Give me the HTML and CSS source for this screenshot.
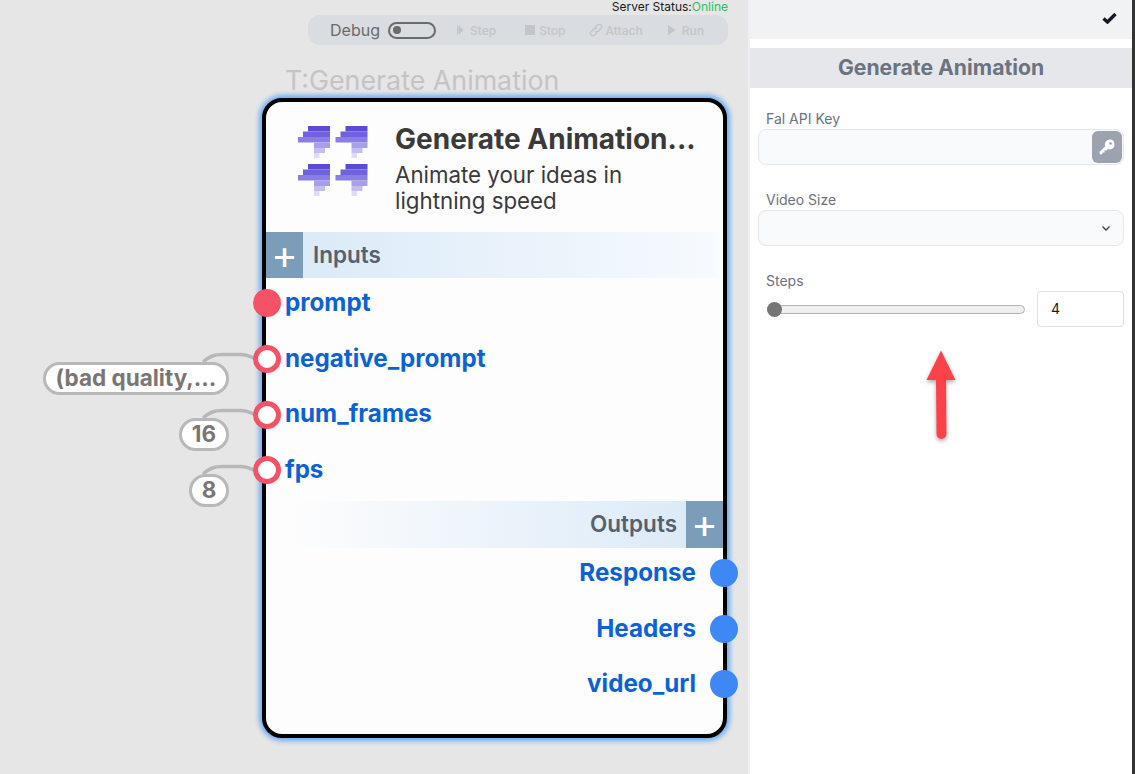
FILE: index.html
```html
<!DOCTYPE html>
<html lang="en">
<head>
<meta charset="utf-8">
<title>Generate Animation</title>
<link rel="stylesheet" href="styles.css">
</head>
<body>
<main class="canvas">
  <div class="status">Server Status:<span class="online">Online</span></div>
  <div class="toolbar">
    <span class="debug-label">Debug</span>
    <span class="toggle"><span class="toggle-dot"></span></span>
    <span class="tool tool-step"><svg width="9" height="12" viewBox="0 0 9 12"><path d="M1 1.500v9h1.500v-9zM3 1.500v9L7.500 6z" fill="#c2c5c9"/></svg>Step</span>
    <span class="tool tool-stop"><span class="stop-square"></span>Stop</span>
    <span class="tool tool-attach"><svg width="14" height="14" viewBox="0 0 14 14" fill="none" stroke="#c2c5c9" stroke-width="1.300"><path d="M6 4.500 8.500 2a2.300 2.300 0 0 1 3.400 3.300L9.300 8a2.300 2.300 0 0 1-3.200 0"/><path d="M8 9.500 5.500 12a2.300 2.300 0 0 1-3.400-3.300L4.700 6a2.300 2.300 0 0 1 3.200 0"/></svg>Attach</span>
    <span class="tool tool-run"><svg width="10" height="12" viewBox="0 0 10 12"><path d="M1 1v10l8-5z" fill="#c2c5c9"/></svg>Run</span>
  </div>

  <div class="node-caption">T:Generate Animation</div>

  <svg class="wires" width="270" height="200" viewBox="0 0 270 200" fill="none" stroke="#b8b8b8" stroke-width="3.500">
    <path d="M203 35C210 29 214 27.500 223 27.500H240C246 27.500 250 29 256 32"/>
    <path d="M203 91C210 85 214 83.500 223 83.500H240C246 83.500 250 85 256 88"/>
    <path d="M203 147C210 141 214 139.500 223 139.500H240C246 139.500 250 141 256 144"/>
  </svg>
  <span class="pill pill-long">(bad quality,...</span>
  <span class="pill pill-16">16</span>
  <span class="pill pill-8">8</span>

  <article class="node">
    <header class="node-head">
      <svg class="logo" width="72" height="72" viewBox="0 0 72 72">
        <g id="m">
          <path d="M11 1h22v5.500H11z" fill="#5b4bd6"/>
          <path d="M6 6.500h27V12H6z" fill="#7061dc"/>
          <path d="M1 12h32v5.500H1z" fill="#8a7de4"/>
          <path d="M17 17.500h16V23H17z" fill="#a89fea"/>
          <path d="M17 23h11v5H17z" fill="#c4bdf1"/>
          <path d="M17 28h5.500v5H17z" fill="#e0dcf8"/>
        </g>
        <use href="#m" x="37.500"/>
        <use href="#m" y="38"/>
        <use href="#m" x="37.500" y="38"/>
      </svg>
      <div class="head-text">
        <h1 class="node-title">Generate Animation...</h1>
        <p class="node-desc">Animate your ideas in lightning speed</p>
      </div>
    </header>

    <div class="band band-in"><span class="plus">+</span><span class="band-label">Inputs</span></div>
    <ul class="ports ports-in">
      <li class="port"><span class="dot dot-solid"></span>prompt</li>
      <li class="port"><span class="dot dot-ring"></span>negative_prompt</li>
      <li class="port"><span class="dot dot-ring"></span>num_frames</li>
      <li class="port"><span class="dot dot-ring"></span>fps</li>
    </ul>

    <div class="band band-out"><span class="band-label">Outputs</span><span class="plus">+</span></div>
    <ul class="ports ports-out">
      <li class="port">Response<span class="dot dot-out"></span></li>
      <li class="port">Headers<span class="dot dot-out"></span></li>
      <li class="port">video_url<span class="dot dot-out"></span></li>
    </ul>
  </article>
</main>

<aside class="panel">
  <div class="panel-top">
    <svg width="15" height="12" viewBox="0 0 15 12"><path d="M1.500 6.500 5.500 10 13.500 2" fill="none" stroke="#111827" stroke-width="3.400"/></svg>
  </div>
  <h2 class="panel-title">Generate Animation</h2>
  <div class="fields">
    <div class="field">
      <label class="field-label">Fal API Key</label>
      <div class="input input-key">
        <span class="key-btn">
          <svg width="18" height="18" viewBox="0 0 18 18"><path d="M11.500 1.500a5 5 0 0 1 1 9.900 5 5 0 0 1-2.700-.3L8.500 12.500H6.500v2H4.500v1.500L2 16.500l-.5-2.500 5.700-5.700a5 5 0 0 1 4.300-6.800z" fill="#fff"/><circle cx="12.500" cy="5.500" r="1.300" fill="#9ca3af"/></svg>
        </span>
      </div>
    </div>
    <div class="field">
      <label class="field-label">Video Size</label>
      <div class="input input-select">
        <svg width="10" height="7" viewBox="0 0 10 7"><path d="M1.500 1.500 5 5l3.500-3.500" fill="none" stroke="#374151" stroke-width="1.300"/></svg>
      </div>
    </div>
    <div class="field">
      <label class="field-label">Steps</label>
      <div class="slider-row">
        <div class="slider"><span class="thumb"></span></div>
        <div class="number">4</div>
      </div>
    </div>
  </div>
  <svg class="arrow" width="40" height="96" viewBox="0 0 40 96">
    <defs><filter id="s" x="-50%" y="-20%" width="200%" height="140%"><feDropShadow dx="0" dy="2" stdDeviation="2" flood-color="#000" flood-opacity=".35"/></filter></defs>
    <path d="M20 2.500 34.500 32H25L25.500 86a5 5 0 0 1-10 0L15 32H5.500z" fill="#fb4349" filter="url(#s)"/>
  </svg>
</aside>
</body>
</html>
```
FILE: styles.css
```css
* { box-sizing: border-box; }
html, body { margin: 0; height: 100%; overflow: hidden; }
body {
  display: flex;
  width: 1135px;
  height: 774px;
  background: #fff;
  font-family: Inter, "Liberation Sans", sans-serif;
}
.canvas {
  position: relative;
  width: 750px;
  height: 774px;
  flex: none;
  background: #e6e6e6;
  border-right: 2px solid #eef0f3;
}
.status {
  position: absolute;
  right: 20px;
  top: 0;
  font-size: 12px;
  line-height: 14px;
  color: #1a1a1a;
}
.online { color: #22c55e; }
.toolbar {
  position: absolute;
  left: 308px;
  top: 15px;
  width: 420px;
  height: 30px;
  background: #d9dce0;
  border-radius: 12px;
  display: flex;
  align-items: center;
  padding-left: 22px;
}
.debug-label { font-size: 16px; color: #6b6b6b; }
.toggle {
  margin-left: 8px;
  width: 48px;
  height: 17px;
  border: 2px solid #6b6b6b;
  border-radius: 9px;
  display: flex;
  align-items: center;
  padding-left: 3px;
}
.toggle-dot { width: 8px; height: 8px; border-radius: 50%; background: #6b6b6b; }
.tool {
  display: inline-flex;
  align-items: center;
  gap: 3px;
  font-size: 12px;
  font-weight: 500;
  color: #c2c5c9;
}
.tool-step { margin-left: 20px; gap: 5px; }
.tool-stop { margin-left: 29px; }
.tool-attach { margin-left: 23px; }
.tool-run { margin-left: 24px; gap: 5px; }
.stop-square { width: 10px; height: 10px; background: #c2c5c9; margin-right: 1px; }
.node-caption {
  position: absolute;
  left: 285px;
  top: 65px;
  font-size: 26.800px;
  line-height: 31px;
  color: #c4c4c4;
}
.wires { position: absolute; left: 0; top: 327px; }
.pill {
  position: absolute;
  height: 33px;
  border: 3.500px solid #b8b8b8;
  border-radius: 17px;
  background: #fff;
  color: #7a7674;
  font-size: 22.500px;
  font-weight: 700;
  line-height: 26px;
  text-align: center;
  white-space: nowrap;
}
.pill-long { left: 43px; top: 362px; width: 186px; }
.pill-16 { left: 179px; top: 418px; width: 50px; }
.pill-8 { left: 189px; top: 474px; width: 40px; }
.node {
  position: absolute;
  left: 262px;
  top: 98px;
  width: 465px;
  height: 640px;
  background: #fdfdfd;
  border: 4px solid #000;
  border-radius: 20px;
  box-shadow: 0 0 5px 3px #6aaef0;
  display: flex;
  flex-direction: column;
}
.node-head {
  height: 130px;
  display: flex;
  padding: 21px 0 0 31px;
  gap: 26px;
}
.logo { flex: none; margin-top: 2px; }
.node-title {
  margin: 0;
  font-size: 28px;
  line-height: 32px;
  font-weight: 700;
  color: #3a3a3a;
  white-space: nowrap;
}
.node-desc {
  margin: 7px 0 0;
  width: 290px;
  font-size: 22.300px;
  line-height: 26px;
  color: #3a3a3a;
}
.band { height: 46px; display: flex; align-items: center; }
.band-in { background: linear-gradient(90deg, #d9e9f7, #f6fafe 98%, #fdfdfd); }
.band-out {
  height: 47px;
  justify-content: flex-end;
  background: linear-gradient(270deg, #d9e9f7, #fdfdfd 95%);
}
.plus {
  width: 37px;
  height: 100%;
  background: #7b9db9;
  color: #fff;
  font-size: 40px;
  font-weight: 400;
  line-height: 46px;
  text-align: center;
}
.band-label { font-size: 22.500px; font-weight: 600; color: #56616f; margin: -2px 9px 0 10px; }
.ports { list-style: none; margin: 0; padding: 0; }
.port {
  position: relative;
  height: 55.700px;
  font-size: 24.200px;
  font-weight: 700;
  color: #0b61d6;
  line-height: 49px;
}
.ports-in .port { padding-left: 19px; }
.ports-in { height: 223px; }
.ports-out .port { text-align: right; padding-right: 27px; line-height: 47px; }
.ports-out { padding-top: 1px; }
.dot {
  position: absolute;
  width: 28px;
  height: 28px;
  border-radius: 50%;
}
.ports-in .dot { left: -13px; top: 11.400px; }
.ports-out .dot { right: -15px; top: 10px; }
.dot-solid { background: #f55268; }
.dot-ring { background: #fff; border: 5px solid #f55268; }
.dot-out { background: #3d88f5; }

.panel { width: 385px; height: 774px; flex: none; position: relative; border-right: 3px solid #333; }
.panel-top {
  height: 39px;
  background: #f1f2f4;
  display: flex;
  align-items: center;
  justify-content: flex-end;
  padding: 0 15px 3px 0;
}
.panel-title {
  margin: 9px 0 0;
  height: 40px;
  background: #e5e7eb;
  color: #6b7280;
  font-size: 21.200px;
  font-weight: 700;
  line-height: 39px;
  text-align: center;
}
.fields { padding: 22px 8px 0; }
.field { margin-bottom: 26px; }
.field-label {
  display: block;
  padding-left: 8px;
  font-size: 14px;
  line-height: 18px;
  color: #6b7280;
}
.input {
  height: 36px;
  margin-top: 1px;
  background: #f9fafb;
  border: 1px solid #e5e7eb;
  border-radius: 8px;
  display: flex;
  align-items: center;
  justify-content: flex-end;
}
.input-select { padding-right: 12px; }
.key-btn {
  width: 30px;
  height: 32px;
  margin-right: 1px;
  background: #9ca3af;
  border-radius: 6px;
  display: flex;
  align-items: center;
  justify-content: center;
}
.slider-row { display: flex; align-items: center; justify-content: space-between; margin-top: 1px; }
.slider {
  position: relative;
  width: 258px;
  height: 9px;
  margin-left: 9px;
  background: #efefef;
  border: 1px solid #b2b2b2;
  border-radius: 5px;
}
.thumb {
  position: absolute;
  left: -1px;
  top: -4px;
  width: 15px;
  height: 15px;
  border-radius: 50%;
  background: #767676;
}
.number {
  width: 87px;
  height: 36px;
  border: 1px solid #dcdfe4;
  border-radius: 4px;
  padding-left: 13px;
  font-size: 14px;
  line-height: 34px;
  color: #2b1a12;
}
.arrow { position: absolute; left: 171px; top: 348px; }
```
